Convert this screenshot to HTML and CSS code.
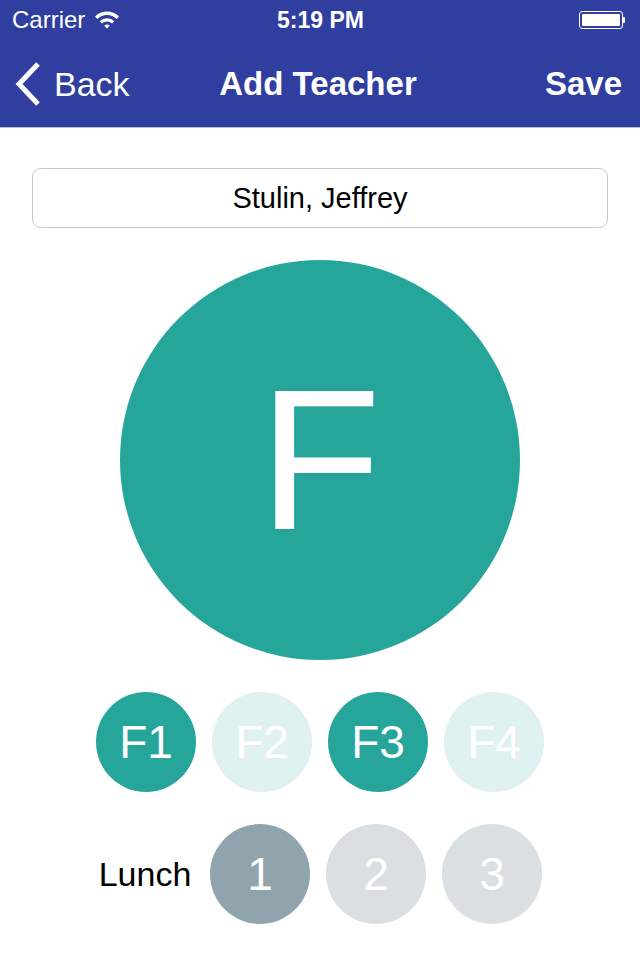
FILE: index.html
```html
<!DOCTYPE html>
<html>
<head>
<meta charset="utf-8">
<link rel="stylesheet" href="styles.css">
</head>
<body>
<div class="header">
  <div class="status">
    <div class="status-left">
      <span>Carrier</span>
      <svg class="wifi" width="26" height="20" viewBox="0 0 26 20">
        <path d="M1 7.5 A17 17 0 0 1 25 7.5 L22.6 10 A13.6 13.6 0 0 0 3.4 10 Z" fill="#fff"/>
        <path d="M5.6 12.2 A10.5 10.5 0 0 1 20.4 12.2 L18 14.6 A7.1 7.1 0 0 0 8 14.6 Z" fill="#fff"/>
        <path d="M10.2 16.8 A4 4 0 0 1 15.8 16.8 L13 19.6 Z" fill="#fff"/>
      </svg>
    </div>
    <div class="status-time">5:19 PM</div>
    <div class="status-right">
      <div class="battery"><div class="battery-fill"></div></div>
      <div class="battery-tip"></div>
    </div>
  </div>
  <div class="nav">
    <div class="nav-back">
      <svg width="28" height="44" viewBox="0 0 28 44"><path d="M24 2 L5 22 L24 42" stroke="#fff" stroke-width="5" fill="none"/></svg>
      <span>Back</span>
    </div>
    <div class="nav-title">Add Teacher</div>
    <div class="nav-save">Save</div>
  </div>
</div>
<div class="content">
  <div class="name-field">Stulin, Jeffrey</div>
  <div class="big-circle">F</div>
  <div class="row">
    <div class="chip teal">F1</div>
    <div class="chip teal-light">F2</div>
    <div class="chip teal">F3</div>
    <div class="chip teal-light">F4</div>
  </div>
  <div class="row lunch-row">
    <div class="lunch-label">Lunch</div>
    <div class="chip gray">1</div>
    <div class="chip gray-light">2</div>
    <div class="chip gray-light">3</div>
  </div>
</div>
</body>
</html>
```
FILE: styles.css
```css
html, body {
  margin: 0;
  padding: 0;
  background: #fff;
  font-family: "Liberation Sans", Arial, sans-serif;
}
.header {
  background: #303F9F;
  height: 128px;
  border-bottom: 1px solid #b8bccc;
  box-sizing: border-box;
  color: #fff;
}
.status {
  height: 40px;
  display: flex;
  align-items: center;
  justify-content: space-between;
  padding: 0 15px 0 12px;
  font-size: 24px;
}
.status-left {
  display: flex;
  align-items: center;
  gap: 9px;
  width: 200px;
}
.wifi { margin-top: -2px; }
.status-time {
  font-weight: bold;
  font-size: 23px;
  margin-left: 4px;
}
.status-right {
  width: 200px;
  display: flex;
  justify-content: flex-end;
  align-items: center;
}
.battery {
  width: 44px;
  height: 18px;
  border: 1px solid #fff;
  border-radius: 3px;
  box-sizing: border-box;
  padding: 2px;
}
.battery-fill {
  background: #fff;
  width: 100%;
  height: 100%;
  border-radius: 1px;
}
.battery-tip {
  width: 2px;
  height: 6px;
  background: #fff;
  border-radius: 0 1px 1px 0;
}
.nav {
  height: 88px;
  display: flex;
  align-items: center;
  justify-content: space-between;
  padding: 0 18px 0 14px;
}
.nav-back {
  display: flex;
  align-items: center;
  gap: 12px;
  font-size: 34px;
  width: 200px;
}
.nav-title {
  font-size: 33px;
  font-weight: bold;
}
.nav-save {
  font-size: 33px;
  font-weight: bold;
  width: 200px;
  text-align: right;
}
.content {
  display: flex;
  flex-direction: column;
  align-items: center;
  padding-top: 40px;
}
.name-field {
  width: 576px;
  height: 60px;
  box-sizing: border-box;
  border: 1px solid #c8c8c8;
  border-radius: 9px;
  display: flex;
  align-items: center;
  justify-content: center;
  font-size: 29px;
  color: #000;
}
.big-circle {
  margin-top: 32px;
  width: 400px;
  height: 400px;
  border-radius: 50%;
  background: #26A69A;
  color: #fff;
  font-size: 200px;
  display: flex;
  align-items: center;
  justify-content: center;
  line-height: 1;
}
.row {
  display: flex;
  gap: 16px;
  margin-top: 32px;
  align-items: center;
}
.lunch-row {
  margin-top: 32px;
  margin-left: -6px;
}
.lunch-label {
  font-size: 34px;
  color: #000;
  width: 100px;
  padding-left: 6px;
  box-sizing: border-box;
  text-align: center;
  margin-right: 2px;
}
.chip {
  width: 100px;
  height: 100px;
  border-radius: 50%;
  display: flex;
  align-items: center;
  justify-content: center;
  color: #fff;
  font-size: 46px;
}
.teal { background: #26A69A; }
.teal-light { background: #DFF1F0; }
.gray { background: #90A4AE; }
.gray-light { background: #D9DFE2; }
```
